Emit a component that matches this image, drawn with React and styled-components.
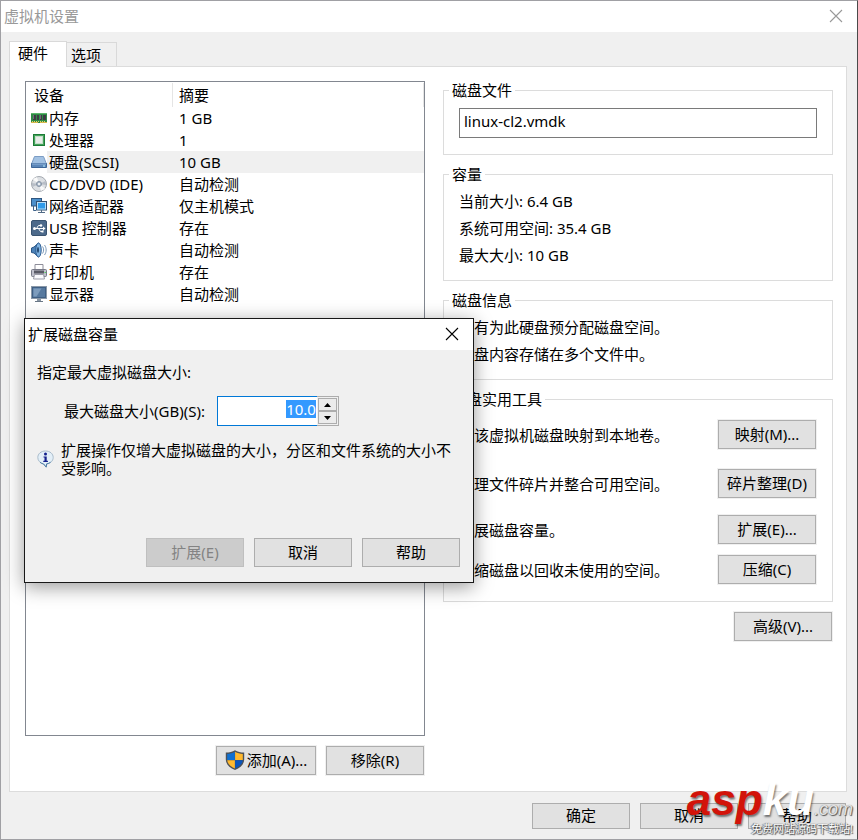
import React, { useEffect, useRef } from 'react';
import styled, { createGlobalStyle } from 'styled-components';

const GlobalStyle = createGlobalStyle`
  * {
    box-sizing: border-box;
  }
  body {
    margin: 0;
    background: #f0f0f0;
  }
  body, button, input {
    font-family: 'Noto Sans', 'Noto Sans CJK SC', sans-serif;
    font-size: 15px;
    line-height: 18px;
    color: #000;
  }
`;

const Window = styled.div`
  position: relative;
  display: flex;
  flex-direction: column;
  min-height: 100vh;
  background: #f0f0f0;
  border: 1px solid #a0a0a4;
  border-right-color: #4a4a4a;
`;
const TitleBar = styled.header`
  display: flex;
  align-items: center;
  justify-content: space-between;
  height: 31px;
  padding: 0 14px 1px 3px;
  background: #fff;
  color: ${(props) => (props.$inactive ? '#999' : '#000')};
`;
const Title = styled.h1`
  margin: 0;
  font-size: 15px;
  font-weight: normal;
`;
const CloseButton = styled.button`
  display: flex;
  padding: 0;
  border: 0;
  background: none;
  color: inherit;
`;
const TabList = styled.div`
  display: flex;
  align-items: flex-end;
  margin: 9px 10px 0 8px;
`;
const Tab = styled.button`
  position: relative;
  height: ${(props) => (props.$active ? '26px' : '24px')};
  width: ${(props) => (props.$active ? '58px' : '50px')};
  padding: ${(props) => (props.$active ? '0 8px 3px' : '0 4px')};
  margin-bottom: ${(props) => (props.$active ? '-1px' : '0')};
  text-align: left;
  background: ${(props) => (props.$active ? '#fff' : '#f0f0f0')};
  border: 1px solid #d9d9d9;
  border-bottom: 0;
  border-left-width: ${(props) => (props.$active ? '1px' : '0')};
  z-index: 1;
`;
const Panel = styled.main`
  flex: 1;
  display: grid;
  grid-template-columns: 400fr 390fr;
  gap: 18px;
  margin: 0 10px 0 8px;
  padding: 14px 13px 16px 15px;
  background: #fff;
  border: 1px solid #dcdcdc;
`;
const Column = styled.div`
  display: flex;
  flex-direction: column;
  gap: 10px;
  min-width: 0;
`;
const DeviceBox = styled.div`
  flex: 1;
  background: #fff;
  border: 1px solid #828790;
`;
const DeviceTable = styled.table`
  width: 100%;
  border-collapse: collapse;
  table-layout: fixed;
`;
const HeadCell = styled.th`
  height: 25px;
  padding: 0 0 0 ${(props) => (props.$first ? '8px' : '6px')};
  width: ${(props) => (props.$first ? '147px' : 'auto')};
  text-align: left;
  font-weight: normal;
  background: linear-gradient(#e5e5e5, #e5e5e5) right bottom / 1px 24px no-repeat;
`;
const Cell = styled.td`
  height: 22px;
  padding: 0 0 0 ${(props) => (props.$first ? '5px' : '6px')};
  background: ${(props) => (props.$selected && !props.$first ? '#f0f0f0' : 'transparent')};
`;
const Device = styled.div`
  display: flex;
  align-items: center;
  height: 22px;
`;
const DeviceName = styled.span`
  flex: 1;
  padding-left: 2px;
  line-height: 22px;
  white-space: nowrap;
  background: ${(props) => (props.$selected ? '#f0f0f0' : 'transparent')};
`;
const ButtonRow = styled.div`
  display: flex;
  justify-content: flex-end;
  gap: 10px;
  padding-right: ${(props) => (props.$inset ? '1px' : '0')};
`;
const Button = styled.button`
  display: flex;
  align-items: center;
  justify-content: center;
  gap: 2px;
  flex: none;
  width: ${(props) => (props.$wide ? '100px' : '98px')};
  height: ${(props) => (props.$short ? '26px' : '29px')};
  padding: 0 0 2px;
  white-space: nowrap;
  background: #e1e1e1;
  border: 1px solid #adadad;
  box-shadow: 0 0 0 1px #f0f0f0;
  &:disabled {
    background: #ccc;
    border-color: #bfbfbf;
    color: #838383;
  }
`;
const Group = styled.fieldset`
  min-width: 0;
  margin: 0;
  padding: ${(props) => props.$pad};
  border: 1px solid #dcdcdc;
`;
const Legend = styled.legend`
  margin-left: -10px;
  padding: 0 3px;
`;
const FileInput = styled.input`
  display: block;
  width: 100%;
  height: 30px;
  padding: 0 4px 5px;
  border: 1px solid #7a7a7a;
  outline: 0;
`;
const Line = styled.p`
  margin: 0;
  line-height: 27px;
`;
const ToolRow = styled.div`
  display: flex;
  align-items: center;
  justify-content: space-between;
  margin-top: ${(props) => props.$space}px;
  padding-right: 1px;
`;
const Footer = styled.footer`
  padding: 11px 10px 10px;
`;

const Dialog = styled.section`
  position: absolute;
  left: 23px;
  top: 317px;
  width: 450px;
  background: #f0f0f0;
  border: 1px solid #181818;
  box-shadow: 0 4px 18px rgba(0, 0, 0, 0.4);
`;
const DialogBody = styled.div`
  padding: 13px 13px 15px 12px;
`;
const SizeRow = styled.div`
  display: flex;
  align-items: center;
  justify-content: flex-start;
  gap: 12px;
  margin: 15px 0;
  padding-left: 27px;
`;
const Spinner = styled.div`
  display: flex;
  width: 122px;
  height: 30px;
`;
const SizeInput = styled.input`
  flex: 1;
  min-width: 0;
  padding: 0 1px 5px;
  text-align: right;
  background: #fff;
  border: 1px solid #0078d7;
  border-right: 0;
  outline: 0;
  &::selection {
    background: #3399ff;
    color: #fff;
  }
`;
const Arrows = styled.div`
  display: flex;
  flex-direction: column;
  width: 22px;
  padding: 1px;
  background: #f0f0f0;
  border: 1px solid #adadad;
  border-left: 0;
`;
const Arrow = styled.button`
  flex: 1;
  display: flex;
  align-items: center;
  justify-content: center;
  padding: 0;
  background: #ececec;
  border: 1px solid #adadad;
`;
const Note = styled.div`
  display: flex;
  align-items: center;
  gap: 7px;
  margin-bottom: 61px;
`;
const NoteText = styled.p`
  flex: 1;
  margin: 0;
`;

const Watermark = styled.div`
  position: absolute;
  right: 4px;
  bottom: 3px;
  display: flex;
  flex-direction: column;
  align-items: flex-end;
  pointer-events: none;
`;
const Brand = styled.div`
  font-family: 'Liberation Sans', sans-serif;
  font-style: italic;
  font-weight: bold;
  font-size: 44px;
  line-height: 26px;
  color: #fff;
  text-shadow: 1px 2px 2px rgba(0, 0, 0, 0.5);
`;
const Red = styled.span`
  color: #d2140a;
`;
const Domain = styled.span`
  font-size: 18px;
  font-weight: normal;
  color: #e4e4e4;
  text-shadow: 1px 1px 1px #555, 0 0 1px #777;
`;
const Slogan = styled.div`
  font-size: 11px;
  line-height: 14px;
  color: #fff;
  text-shadow: 1px 1px 1px #444, 0 0 1px #555, -1px 0 1px #777;
`;

const CloseIcon = () => (
  <svg width="14" height="14" viewBox="0 0 14 14">
    <path d="M1 1l12 12M13 1L1 13" stroke="currentColor" strokeWidth="1.1" fill="none" />
  </svg>
);

const Shield = () => (
  <svg width="20" height="20" viewBox="0 0 20 20">
    <path d="M10 0.2C7.500 1.800 4.300 2.500.8 2.500v7c0 4.700 3.800 8.400 9.200 10.400 5.400-2 9.200-5.700 9.200-10.400v-7C15.700 2.500 12.500 1.800 10 .2z" fill="#4d5156" />
    <path d="M9.900 1.800C7.500 3.200 5.100 3.800 2.200 3.900V10h7.700z" fill="#0f6fd0" />
    <path d="M10.100 1.800c2.400 1.400 4.800 2 7.700 2.100V10h-7.700z" fill="#ffb92e" />
    <path d="M2.200 10.200h7.700v8.200C5.600 16.600 2.600 14 2.200 10.200z" fill="#ffb92e" />
    <path d="M17.800 10.200h-7.700v8.200c4.300-1.800 7.300-4.400 7.700-8.200z" fill="#0a55bd" />
  </svg>
);

const InfoIcon = () => (
  <svg width="17" height="18" viewBox="0 0 17 18">
    <path d="M8.500 1C4 1 .8 3.800.8 7.500c0 3.200 2.500 5.700 5.700 6.400l2.700 3.300.4-3.200c3.800-.4 6.600-3.200 6.600-6.500C16.200 3.800 13 1 8.500 1z" fill="#e3eff8" stroke="#a9bccb" />
    <path d="M3 12.300c1 .9 2.300 1.500 3.600 1.700l2.600 3.100.4-3.200c1.500-.2 2.900-.8 4-1.700" fill="none" stroke="#4b7ba5" />
    <circle cx="8.500" cy="4" r="1.500" fill="#14208c" />
    <path d="M6.500 6.500h3.200v4.300h1.200v1.200H6.300v-1.200h1.200V7.600h-1z" fill="#14208c" />
  </svg>
);

const icons = {
  memory: (
    <>
      <rect x="0" y="3" width="16" height="10" fill="#2e8b45" />
      <rect x="0" y="3" width="16" height="1" fill="#5db56c" />
      <path d="M2 5h3v5H2zM6 5h2v5H6zM9 5h2v5H9zM12 5h3v5h-3z" fill="#3c3c44" />
      <path d="M2.500 5v4M9.500 5v4" stroke="#85858c" strokeWidth=".7" />
      <path d="M1 11.500h14" stroke="#e3d36a" strokeDasharray="1 1" />
      <path d="M0 12.500h7M9 12.500h7" stroke="#d7b94c" />
    </>
  ),
  cpu: (
    <>
      <rect x="2.500" y="2.500" width="11" height="11" fill="#46a35c" stroke="#1c7c36" />
      <rect x="4.500" y="4.500" width="7" height="7" fill="#e8ebe8" stroke="#c3dec8" />
    </>
  ),
  disk: (
    <>
      <path d="M3.500 2.500h9l3 7.500H.5z" fill="#a3c2e3" stroke="#7b9cc4" />
      <path d="M.5 9.500h15v4H.5z" fill="#5b86b8" stroke="#3d6698" />
      <path d="M1 10h14" stroke="#8db1da" />
      <path d="M12 12h2" stroke="#b9f0ff" />
    </>
  ),
  cd: (
    <>
      <circle cx="8" cy="8" r="7.500" fill="#dde0e4" stroke="#a4a9b0" />
      <path d="M8 8L2 3.500A7 7 0 0 1 6 1.300zM8 8l6 4.500a7 7 0 0 1-4 2.200z" fill="#fafafa" />
      <path d="M8 8L1.500 11A7 7 0 0 1 1 7zM8 8l6.500-3a7 7 0 0 1 .5 4z" fill="#b8bec7" />
      <circle cx="8" cy="8" r="2.500" fill="#aebccc" stroke="#8794a4" />
      <circle cx="8" cy="8" r="1" fill="#fff" />
    </>
  ),
  network: (
    <>
      <rect x=".5" y=".5" width="10" height="7.500" fill="#4b8fcb" stroke="#30567f" />
      <path d="M2.500 8v4.500H5" fill="none" stroke="#3d618a" />
      <rect x="5.500" y="3.500" width="10" height="8.500" fill="#2f9bea" stroke="#34506f" />
      <rect x="6.500" y="4.500" width="8" height="6.500" fill="none" stroke="#b5ddf8" />
      <path d="M10.500 12v2M7 14.500h7" stroke="#526b86" />
    </>
  ),
  usb: (
    <>
      <rect x=".5" y=".5" width="15" height="15" rx="1.500" fill="#4d6a8b" stroke="#395370" />
      <path d="M3 8.500h10M5.500 8.500l2-3h2M7.500 8.500l2 3h1.500" fill="none" stroke="#fff" />
      <circle cx="3.500" cy="8.500" r="1.500" fill="#fff" />
      <circle cx="10" cy="5.500" r="1.300" fill="#fff" />
      <path d="M10.500 10.500h2v2h-2zM12 6.500l2.500 2-2.500 2z" fill="#fff" />
    </>
  ),
  sound: (
    <>
      <path d="M.5 6v4.500l2.500.5 4.500 4V1L3 5z" fill="#4c82b8" stroke="#2a5686" />
      <ellipse cx="7.500" cy="8" rx="2.700" ry="7" fill="#7fb2e0" stroke="#2c5c92" />
      <ellipse cx="7" cy="8" rx="1" ry="3" fill="#20466f" />
      <path d="M11.500 4.500c1.500 2 1.500 5 0 7M13.500 3c2.200 3 2.200 7 0 10" fill="none" stroke="#7c9ab8" />
    </>
  ),
  printer: (
    <>
      <path d="M4 .5h8V7H4z" fill="#fff" stroke="#8d8d99" />
      <rect x=".5" y="5.500" width="15" height="7" rx="1" fill="#bfc0cc" stroke="#777987" />
      <path d="M3 6.500h10v3H3z" fill="#5a5b67" />
      <path d="M3.500 10.500h9l1 4.500h-11z" fill="#fafafe" stroke="#9b9ca8" />
      <path d="M13.500 8.500h1.500" stroke="#55d15e" />
    </>
  ),
  display: (
    <>
      <rect x=".5" y=".5" width="15" height="12" fill="#d5dde6" stroke="#8a98a8" />
      <rect x="1.500" y="1.500" width="13" height="10" fill="#56799f" stroke="#3f5f84" />
      <path d="M2.500 2.500h8l-5 8h-3z" fill="#7d9cbd" />
      <path d="M6 13h4v2H6z" fill="#8895a3" />
      <path d="M4 15.500h8" stroke="#697786" />
    </>
  ),
};

const DeviceIcon = ({ name }) => (
  <svg width="16" height="16" viewBox="0 0 16 16">
    {icons[name]}
  </svg>
);

const devices = [
  { icon: 'memory', name: '内存', summary: '1 GB' },
  { icon: 'cpu', name: '处理器', summary: '1' },
  { icon: 'disk', name: '硬盘(SCSI)', summary: '10 GB', selected: true },
  { icon: 'cd', name: 'CD/DVD (IDE)', summary: '自动检测' },
  { icon: 'network', name: '网络适配器', summary: '仅主机模式' },
  { icon: 'usb', name: 'USB 控制器', summary: '存在' },
  { icon: 'sound', name: '声卡', summary: '自动检测' },
  { icon: 'printer', name: '打印机', summary: '存在' },
  { icon: 'display', name: '显示器', summary: '自动检测' },
];

const tools = [
  { text: '将该虚拟机磁盘映射到本地卷。', button: '映射(M)...', space: 0 },
  { text: '整理文件碎片并整合可用空间。', button: '碎片整理(D)', space: 20 },
  { text: '扩展磁盘容量。', button: '扩展(E)...', space: 17 },
  { text: '压缩磁盘以回收未使用的空间。', button: '压缩(C)', space: 11 },
];

const DeviceList = () => (
  <DeviceBox>
    <DeviceTable>
      <thead>
        <tr>
          <HeadCell $first>设备</HeadCell>
          <HeadCell>摘要</HeadCell>
        </tr>
      </thead>
      <tbody>
        {devices.map((device) => (
          <tr key={device.name}>
            <Cell $first>
              <Device>
                <DeviceIcon name={device.icon} />
                <DeviceName $selected={device.selected}>{device.name}</DeviceName>
              </Device>
            </Cell>
            <Cell $selected={device.selected}>{device.summary}</Cell>
          </tr>
        ))}
      </tbody>
    </DeviceTable>
  </DeviceBox>
);

const ExpandDialog = () => {
  const sizeRef = useRef(null);

  useEffect(() => {
    sizeRef.current.focus();
    sizeRef.current.select();
  }, []);

  return (
    <Dialog role="dialog" aria-labelledby="expand-title">
      <TitleBar>
        <Title as="h2" id="expand-title">扩展磁盘容量</Title>
        <CloseButton aria-label="关闭">
          <CloseIcon />
        </CloseButton>
      </TitleBar>
      <DialogBody>
        指定最大虚拟磁盘大小:
        <SizeRow>
          <label htmlFor="size">最大磁盘大小(GB)(S):</label>
          <Spinner>
            <SizeInput id="size" ref={sizeRef} defaultValue="10.0" />
            <Arrows>
              <Arrow aria-label="增加">
                <svg width="7" height="4" viewBox="0 0 7 4"><path d="M0 4l3.500-4L7 4z" /></svg>
              </Arrow>
              <Arrow aria-label="减少">
                <svg width="7" height="4" viewBox="0 0 7 4"><path d="M0 0l3.500 4L7 0z" /></svg>
              </Arrow>
            </Arrows>
          </Spinner>
        </SizeRow>
        <Note>
          <InfoIcon />
          <NoteText>扩展操作仅增大虚拟磁盘的大小，分区和文件系统的大小不受影响。</NoteText>
        </Note>
        <ButtonRow>
          <Button disabled>扩展(E)</Button>
          <Button>取消</Button>
          <Button>帮助</Button>
        </ButtonRow>
      </DialogBody>
    </Dialog>
  );
};

const App = () => {
  return (
    <>
      <GlobalStyle />
      <Window>
        <TitleBar $inactive>
          <Title>虚拟机设置</Title>
          <CloseButton aria-label="关闭">
            <CloseIcon />
          </CloseButton>
        </TitleBar>
        <TabList role="tablist">
          <Tab role="tab" aria-selected="true" $active>硬件</Tab>
          <Tab role="tab" aria-selected="false">选项</Tab>
        </TabList>
        <Panel>
          <Column>
            <DeviceList />
            <ButtonRow $inset>
              <Button $wide>
                <Shield />
                添加(A)...
              </Button>
              <Button>移除(R)</Button>
            </ButtonRow>
          </Column>
          <Column>
            <Group $pad="9px 15px 16px">
              <Legend>磁盘文件</Legend>
              <FileInput aria-label="磁盘文件" defaultValue="linux-cl2.vmdk" />
            </Group>
            <Group $pad="5px 15px 11px">
              <Legend>容量</Legend>
              <Line>当前大小: 6.4 GB</Line>
              <Line>系统可用空间: 35.4 GB</Line>
              <Line>最大大小: 10 GB</Line>
            </Group>
            <Group $pad="5px 15px 11px">
              <Legend>磁盘信息</Legend>
              <Line>没有为此硬盘预分配磁盘空间。</Line>
              <Line>硬盘内容存储在多个文件中。</Line>
            </Group>
            <Group $pad="12px 15px 17px">
              <Legend>磁盘实用工具</Legend>
              {tools.map((tool) => (
                <ToolRow key={tool.button} $space={tool.space}>
                  <span>{tool.text}</span>
                  <Button>{tool.button}</Button>
                </ToolRow>
              ))}
            </Group>
            <ButtonRow $inset>
              <Button>高级(V)...</Button>
            </ButtonRow>
          </Column>
        </Panel>
        <Footer>
          <ButtonRow $inset>
            <Button $short>确定</Button>
            <Button $short>取消</Button>
            <Button $short>帮助</Button>
          </ButtonRow>
        </Footer>
        <ExpandDialog />
        <Watermark>
          <Brand>
            <Red>asp</Red>ku<Domain>.com</Domain>
          </Brand>
          <Slogan>免费网站源码下载站!</Slogan>
        </Watermark>
      </Window>
    </>
  );
};
export default App;
